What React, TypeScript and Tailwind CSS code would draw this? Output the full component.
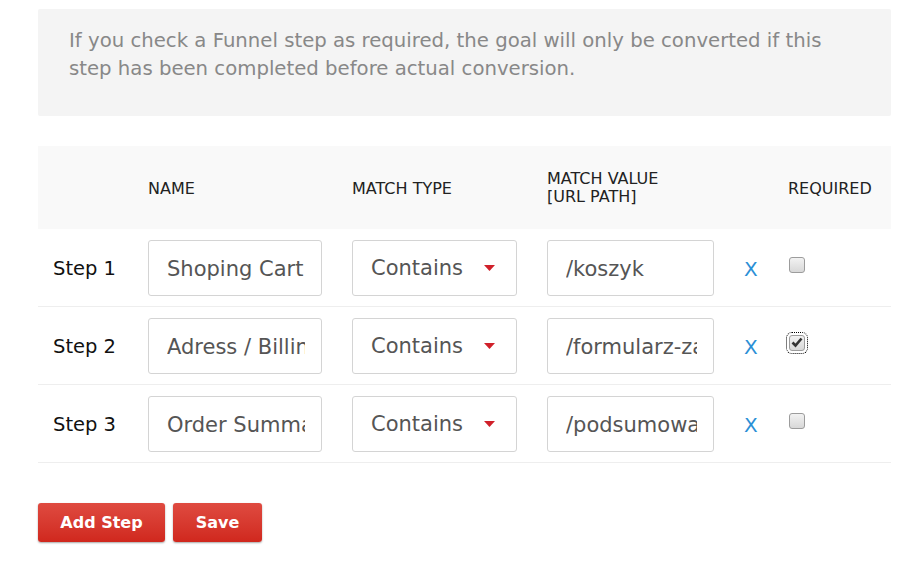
import React from 'react';

const steps = [
  { label: 'Step 1', name: 'Shoping Cart', value: '/koszyk', required: false },
  { label: 'Step 2', name: 'Adress / Billing', value: '/formularz-zamowienia', required: true },
  { label: 'Step 3', name: 'Order Summary', value: '/podsumowanie', required: false },
];

const cols = 'grid grid-cols-[110px_204px_195px_197px_44px_1fr]';

function Field({ value }: { value: string }) {
  return (
    <input
      readOnly
      value={value}
      className="block h-[56px] w-full rounded-[3px] border border-[#d4d4d4] bg-white pl-[18px] pr-[16px] pt-[2px] text-[21px] text-[#555] outline-none"
    />
  );
}

function Checkbox({ checked }: { checked: boolean }) {
  return (
    <div
      className={
        'flex h-[16px] w-[16px] items-center justify-center rounded-[3px] border border-[#9c9c9c] bg-gradient-to-b from-[#f2f2f2] to-[#d8d8d8] ' +
        (checked ? 'outline outline-1 outline-dotted outline-black outline-offset-[2px]' : '')
      }
    >
      {checked && (
        <svg width="12" height="11" viewBox="0 0 12 11">
          <path d="M1.5 5.5 L4.5 8.5 L10.5 1.5" fill="none" stroke="#333" strokeWidth="2.6" />
        </svg>
      )}
    </div>
  );
}

export default function App() {
  return (
    <div className="min-h-[564px] bg-white pl-[38px] pr-[10px] pt-[9px] font-['DejaVu_Sans',Verdana,sans-serif]">
      <div className="h-[107px] rounded-[2px] bg-[#f4f4f4] pl-[31px] pr-[50px] pt-[18px] text-[19.7px] leading-[28px] text-[#888]">
        If you check a Funnel step as required, the goal will only be converted if this step has been completed before actual conversion.
      </div>

      <div className="mt-[30px]">
        <div className={cols + ' h-[83px] items-center bg-[#f9f9f9] pt-[2px] text-[16px] leading-[18px] text-[#222]'}>
          <div />
          <div>NAME</div>
          <div>MATCH TYPE</div>
          <div className="pb-[2px]">
            MATCH VALUE
            <br />
            [URL PATH]
          </div>
          <div />
          <div>REQUIRED</div>
        </div>

        {steps.map((s) => (
          <div key={s.label} className={cols + ' h-[78px] items-center border-b border-[#eeeeee]'}>
            <div className="pl-[15px] pt-[2px] text-[19.5px] text-[#111]">{s.label}</div>
            <div className="flex">
              <div className="w-[174px]">
                <Field value={s.name} />
              </div>
            </div>
            <div className="flex">
              <div className="flex h-[56px] w-[165px] items-center justify-between rounded-[3px] border border-[#d4d4d4] bg-white pl-[18px] pr-[21px] pt-[3px] text-[21px] text-[#555]">
                <span>Contains</span>
                <svg width="11" height="6" viewBox="0 0 11 6" className="mb-[2px]">
                  <path d="M0 0 H11 L5.5 6 Z" fill="#d0202a" />
                </svg>
              </div>
            </div>
            <div className="flex">
              <div className="w-[167px]">
                <Field value={s.value} />
              </div>
            </div>
            <div className="pt-[2px] text-[20px] text-[#2b8fd6]">X</div>
            <div className="pl-[1px] pb-[6px]">
              <Checkbox checked={s.required} />
            </div>
          </div>
        ))}
      </div>

      <div className="mt-[40px] flex gap-[8px]">
        <button className="h-[39px] w-[127px] rounded-[3px] bg-gradient-to-b from-[#df4a40] to-[#d0271d] text-[16px] font-bold text-white shadow-[0_1px_2px_rgba(0,0,0,0.35)]">
          Add Step
        </button>
        <button className="h-[39px] w-[89px] rounded-[3px] bg-gradient-to-b from-[#df4a40] to-[#d0271d] text-[16px] font-bold text-white shadow-[0_1px_2px_rgba(0,0,0,0.35)]">
          Save
        </button>
      </div>
    </div>
  );
}
